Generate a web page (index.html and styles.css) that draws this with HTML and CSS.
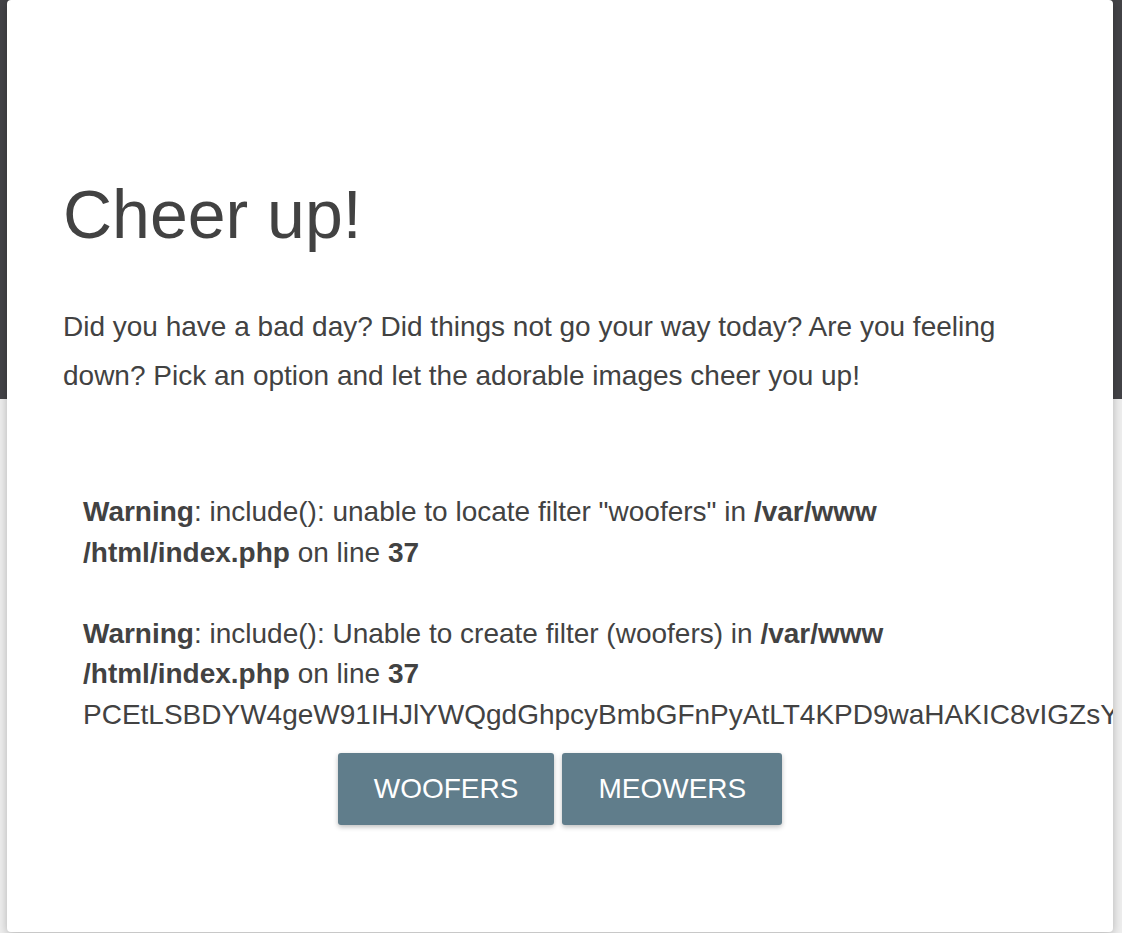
FILE: index.html
```html
<!DOCTYPE html>
<html>
<head>
<meta charset="utf-8">
<title>Cheer up!</title>
<link rel="stylesheet" href="styles.css">
</head>
<body>
<div class="card">
  <h1 class="title">Cheer up!</h1>
  <p class="lead">Did you have a bad day? Did things not go your way today? Are you feeling down? Pick an option and let the adorable images cheer you up!</p>
  <div class="output">
    <b>Warning</b>: include(): unable to locate filter "woofers" in <b>/var/www<wbr>/html/index.php</b> on line <b>37</b><br><br>
    <b>Warning</b>: include(): Unable to create filter (woofers) in <b>/var/www<wbr>/html/index.php</b> on line <b>37</b><br>
    PCEtLSBDYW4geW91IHJlYWQgdGhpcyBmbGFnPyAtLT4KPD9waHAKIC8vIGZsYWc6IHBpY29DVEZ7YzRuX3lvdV9yM2FkXzRsbF9mMWxlc30KPz4K
  </div>
  <div class="actions">
    <button class="btn">Woofers</button>
    <button class="btn">Meowers</button>
  </div>
</div>
</body>
</html>
```
FILE: styles.css
```css
html, body {
  margin: 0;
  padding: 0;
}
body {
  background: linear-gradient(to bottom, #434347 0, #434347 399px, #eeeeee 399px);
  min-height: 933px;
  font-family: "Liberation Sans", Arial, sans-serif;
  color: #424242;
}
.card {
  margin: 0 9px 0 7px;
  height: 932px;
  box-sizing: border-box;
  background: #ffffff;
  border-radius: 4px;
  box-shadow: 0 2px 10px rgba(0, 0, 0, 0.25);
  overflow: hidden;
  padding: 174px 56px 0 56px;
}
.title {
  font-size: 68px;
  font-weight: 400;
  line-height: 80px;
  margin: 0 0 48px;
}
.lead {
  font-size: 28px;
  line-height: 49px;
  margin: 0 0 92px;
}
.output {
  padding: 0 20px;
  font-size: 28px;
  line-height: 40.5px;
}
.actions {
  display: flex;
  justify-content: center;
  gap: 8px;
  margin-top: 18px;
}
.btn {
  background: #607d8b;
  color: #ffffff;
  border: none;
  border-radius: 3px;
  font-family: "Liberation Sans", Arial, sans-serif;
  font-size: 28px;
  text-transform: uppercase;
  height: 72px;
  padding: 0 36px;
  box-shadow: 0 2px 5px rgba(0, 0, 0, 0.26);
}
```
